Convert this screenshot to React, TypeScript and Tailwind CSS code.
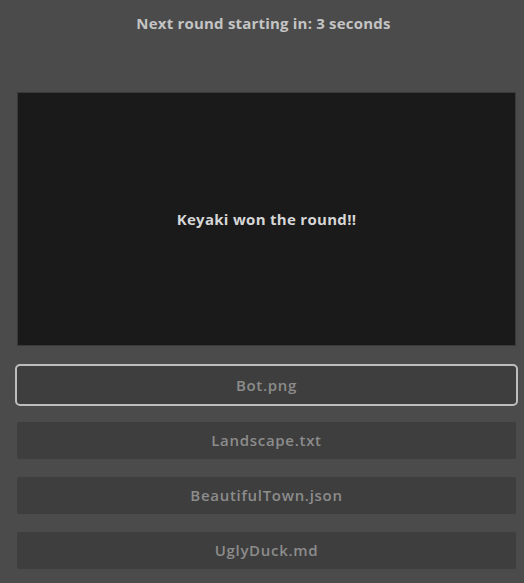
const files = ["Bot.png", "Landscape.txt", "BeautifulTown.json", "UglyDuck.md"];

export default function App() {
  return (
    <div
      className="min-h-[583px] w-full bg-[#4b4b4b] pl-[17px] pr-[8px]"
      style={{ fontFamily: '"Open Sans", "Noto Sans", sans-serif' }}
    >
      <div className="flex h-[46px] items-center justify-center pr-[6px] pt-[1px] text-[15px] font-bold tracking-[0.2px] text-[#c4c4c4]">
        Next round starting in: 3 seconds
      </div>
      <div className="mt-[46px] flex h-[254px] items-center justify-center border border-[#3a3a3a] bg-[#1a1a1a] text-[15px] font-bold tracking-[0.3px] text-[#d6d6d6]">
        Keyaki won the round!!
      </div>
      <div className="mt-[20px] flex flex-col gap-[18px]">
        {files.map((name, i) => (
          <button
            key={name}
            className={
              i === 0
                ? "flex h-[38px] items-center justify-center rounded-[3px] bg-[#3e3e3e] text-[15px] font-semibold tracking-[0.7px] text-[#8c8c8c] outline outline-2 outline-[#bdbdbd]"
                : "flex h-[37px] items-center justify-center rounded-[2px] bg-[#3e3e3e] text-[15px] font-semibold tracking-[0.7px] text-[#8c8c8c]"
            }
          >
            {name}
          </button>
        ))}
      </div>
    </div>
  );
}
